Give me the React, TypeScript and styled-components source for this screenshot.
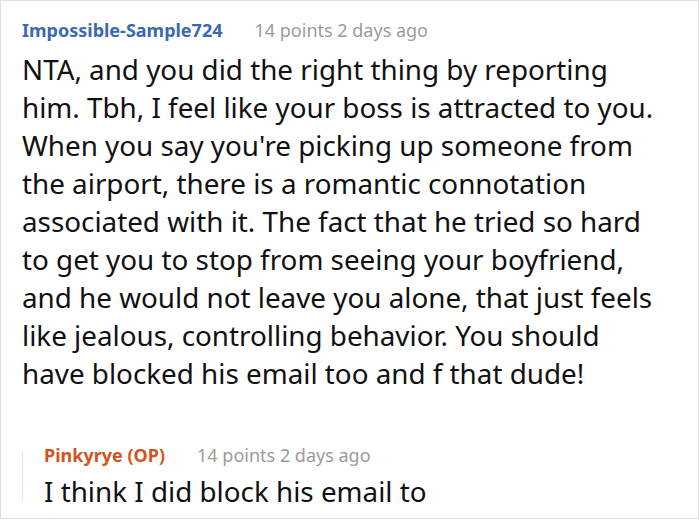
import React from "react";
import styled, { createGlobalStyle } from "styled-components";

const Global = createGlobalStyle`
  html, body { margin: 0; padding: 0; background: #fff; }
  body { font-family: "Noto Sans", "Open Sans", sans-serif; }
`;

const Frame = styled.div`
  box-sizing: border-box;
  width: 699px;
  height: 519px;
  border: 1px solid #e0e0e0;
  overflow: hidden;
  padding: 17px 0 0 21px;
  background: #fff;
`;

const Comment = styled.div`
  display: flex;
  flex-direction: column;
`;

const Header = styled.div<{ $gap: number }>`
  display: flex;
  align-items: baseline;
  gap: 32px;
  height: 24px;
  line-height: 24px;
  margin-bottom: ${(p) => p.$gap}px;
  white-space: nowrap;
`;

const Author = styled.span<{ $op?: boolean }>`
  font-weight: 700;
  font-size: 18px;
  color: ${(p) => (p.$op ? "#d2541c" : "#3a68b2")};
`;

const Meta = styled.span`
  font-size: 18px;
  color: #9b9b9b;
`;

const Body = styled.p`
  margin: 0;
  font-size: 27.8px;
  line-height: 38px;
  color: #111;
  white-space: nowrap;
`;

const Reply = styled.div`
  position: relative;
  margin-top: 51px;
  padding-left: 22px;
  display: flex;
  flex-direction: column;

  &::before {
    content: "";
    position: absolute;
    left: 0;
    top: 9px;
    width: 1px;
    height: 50px;
    background: #e3e3e3;
  }
`;

const lines = [
  "NTA, and you did the right thing by reporting",
  "him. Tbh, I feel like your boss is attracted to you.",
  "When you say you're picking up someone from",
  "the airport, there is a romantic connotation",
  "associated with it. The fact that he tried so hard",
  "to get you to stop from seeing your boyfriend,",
  "and he would not leave you alone, that just feels",
  "like jealous, controlling behavior. You should",
  "have blocked his email too and f that dude!",
];

export default function App() {
  return (
    <>
      <Global />
      <Frame>
        <Comment>
          <Header $gap={8}>
            <Author>Impossible-Sample724</Author>
            <Meta>14 points 2 days ago</Meta>
          </Header>
          <Body>
            {lines.map((l, i) => (
              <React.Fragment key={i}>
                {l}
                {i < lines.length - 1 && <br />}
              </React.Fragment>
            ))}
          </Body>
          <Reply>
            <Header $gap={5}>
              <Author $op>Pinkyrye (OP)</Author>
              <Meta>14 points 2 days ago</Meta>
            </Header>
            <Body>I think I did block his email to</Body>
          </Reply>
        </Comment>
      </Frame>
    </>
  );
}
